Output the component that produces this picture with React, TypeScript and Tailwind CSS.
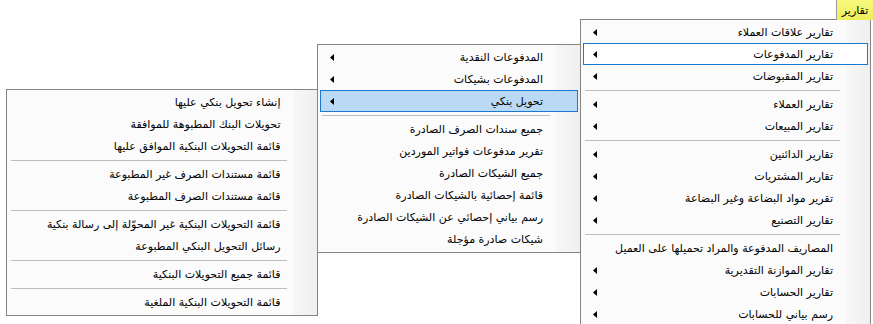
import { FC } from "react"

type Row = { label: string; sub?: boolean; state?: "open" | "active" } | "sep"

const mainItems: Row[] = [
    { label: "تقارير علاقات العملاء", sub: true },
    { label: "تقارير المدفوعات", sub: true, state: "open" },
    { label: "تقارير المقبوضات", sub: true },
    "sep",
    { label: "تقارير العملاء", sub: true },
    { label: "تقارير المبيعات", sub: true },
    "sep",
    { label: "تقارير الدائنين", sub: true },
    { label: "تقارير المشتريات", sub: true },
    { label: "تقرير مواد البضاعة وغير البضاعة", sub: true },
    { label: "تقارير التصنيع", sub: true },
    "sep",
    { label: "المصاريف المدفوعة والمراد تحميلها على العميل" },
    { label: "تقارير الموازنة التقديرية", sub: true },
    { label: "تقارير الحسابات", sub: true },
    { label: "رسم بياني للحسابات", sub: true },
]

const paymentItems: Row[] = [
    { label: "المدفوعات النقدية", sub: true },
    { label: "المدفوعات بشيكات", sub: true },
    { label: "تحويل بنكي", sub: true, state: "active" },
    "sep",
    { label: "جميع سندات الصرف الصادرة" },
    { label: "تقرير مدفوعات فواتير الموردين" },
    { label: "جميع الشيكات الصادرة" },
    { label: "قائمة إحصائية بالشيكات الصادرة" },
    { label: "رسم بياني إحصائي عن الشيكات الصادرة" },
    { label: "شيكات صادرة مؤجلة" },
]

const transferItems: Row[] = [
    { label: "إنشاء تحويل بنكي عليها" },
    { label: "تحويلات البنك المطبوهة للموافقة" },
    { label: "قائمة التحويلات البنكية الموافق عليها" },
    "sep",
    { label: "قائمة مستندات الصرف غير المطبوعة" },
    { label: "قائمة مستندات الصرف المطبوعة" },
    "sep",
    { label: "قائمة التحويلات البنكية غير المحوّلة إلى رسالة بنكية" },
    { label: "رسائل التحويل البنكي المطبوعة" },
    "sep",
    { label: "قائمة جميع التحويلات البنكية" },
    "sep",
    { label: "قائمة التحويلات البنكية الملغية" },
]

const Arrow = () => (
    <svg width="4" height="7" viewBox="0 0 4 7" className="shrink-0">
        <polygon points="4,0 4,7 0,3.5" fill="#000" />
    </svg>
)

const Menu: FC<{ items: Row[]; className?: string }> = ({ items, className }) => {
    return (
        <div
            className={
                "border border-[#848484] px-[2px] pt-[1px] pb-[2px] bg-[linear-gradient(to_left,#efefef_0px,#f7f7f7_24px,#fbfbfb_24px)] " +
                (className ?? "")
            }
        >
            {items.map((item, i) => {
                if (item === "sep") {
                    return (
                        <div key={i} className="h-[6px] flex items-center pl-[2px] pr-[28px]">
                            <div className="h-px w-full bg-[#bdbdbd]" />
                        </div>
                    )
                }
                const box =
                    item.state === "open"
                        ? "border border-[#1a78d2] bg-white"
                        : item.state === "active"
                        ? "border border-[#1a78d2] bg-[#b9d9f4]"
                        : "border border-transparent"
                return (
                    <div
                        key={i}
                        className={"h-[22px] flex items-center justify-between pl-[9px] pr-[34px] " + box}
                    >
                        <span>{item.sub && <Arrow />}</span>
                        <span dir="rtl" className="whitespace-nowrap leading-none">
                            {item.label}
                        </span>
                    </div>
                )
            })}
        </div>
    )
}

export default function App() {
    return (
        <div
            className="w-[873px] h-[324px] overflow-hidden bg-white text-[11px] text-black"
            style={{ fontFamily: '"DejaVu Sans", Tahoma, sans-serif' }}
        >
            <div className="flex items-start pl-[6px]">
                <Menu items={transferItems} className="w-[313px] mt-[89px]" />
                <Menu items={paymentItems} className="w-[264px] mt-[44px] -ml-px relative" />
                <div className="flex flex-col items-end w-[293px] -ml-px relative">
                    <div className="h-[20px] w-[37px] -mb-px relative z-10 bg-[linear-gradient(to_bottom,#f8f87e,#eeee5c)] border-l border-[#9a9a9a] flex items-center justify-center">
                        <span dir="rtl" className="leading-none">تقارير</span>
                    </div>
                    <Menu items={mainItems} className="w-[291px] mr-[2px]" />
                </div>
            </div>
        </div>
    )
}
